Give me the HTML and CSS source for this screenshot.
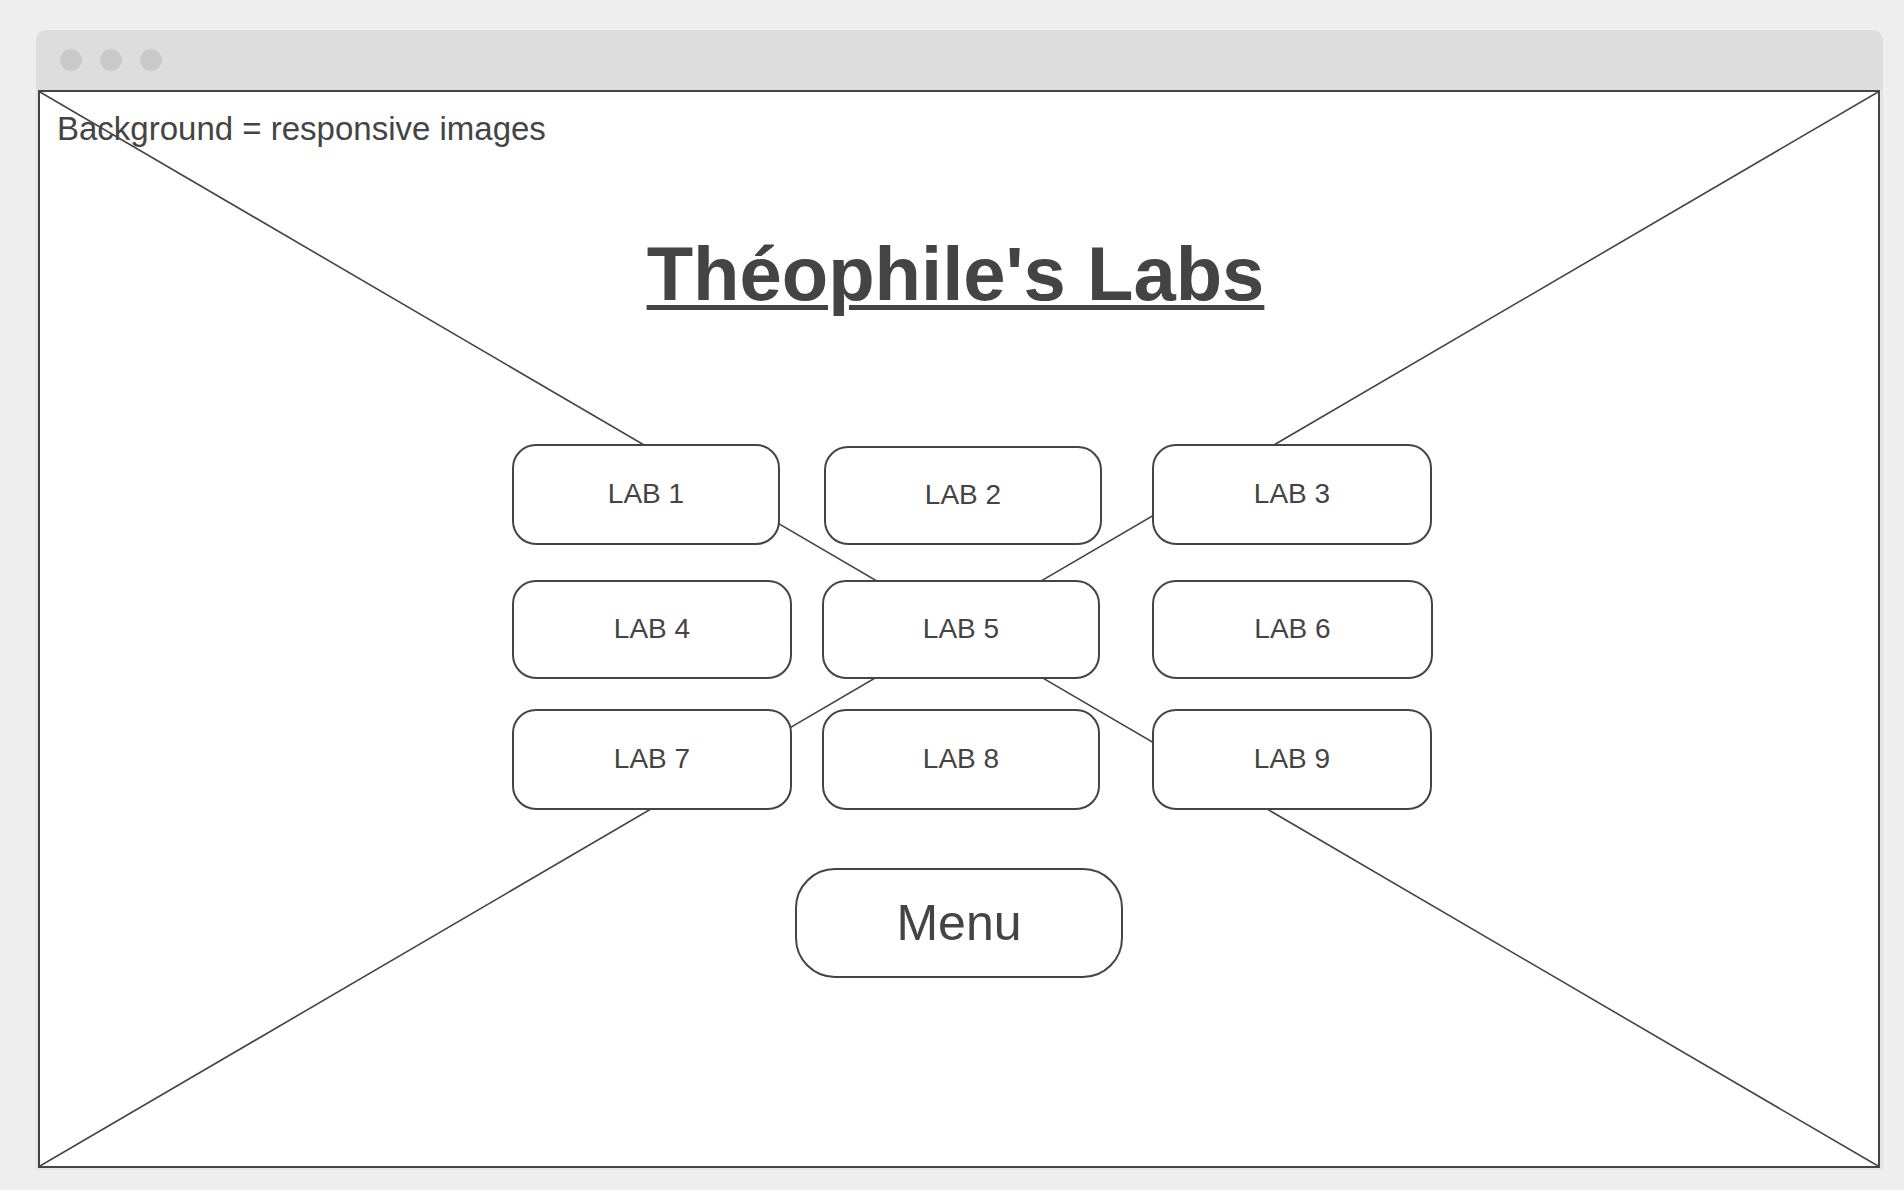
FILE: index.html
```html
<!DOCTYPE html>
<html lang="fr">
<head>
<meta charset="utf-8">
<title>Théophile's Labs</title>
<link rel="stylesheet" href="styles.css">
</head>
<body>
<div class="window">
  <div class="titlebar">
    <span class="dot"></span><span class="dot"></span><span class="dot"></span>
  </div>
  <div class="content">
    <svg class="cross" viewBox="0 0 100 100" preserveAspectRatio="none" aria-hidden="true">
      <line x1="0" y1="0" x2="100" y2="100" vector-effect="non-scaling-stroke"/>
      <line x1="100" y1="0" x2="0" y2="100" vector-effect="non-scaling-stroke"/>
    </svg>
    <p class="caption">Background = responsive images</p>
    <h1 class="title">Théophile's Labs</h1>
    <div class="labs">
      <a class="lab lab-1 r1">LAB 1</a>
      <a class="lab lab-2 r1">LAB 2</a>
      <a class="lab lab-3 r1 c3">LAB 3</a>
      <a class="lab lab-4 r2">LAB 4</a>
      <a class="lab lab-5 r2">LAB 5</a>
      <a class="lab lab-6 r2 c3">LAB 6</a>
      <a class="lab lab-7 r3">LAB 7</a>
      <a class="lab lab-8 r3">LAB 8</a>
      <a class="lab lab-9 r3 c3">LAB 9</a>
    </div>
    <a class="menu">Menu</a>
  </div>
</div>
</body>
</html>
```
FILE: styles.css
```css
* { box-sizing: border-box; }

html, body {
  margin: 0;
  background: #eeeeee;
  font-family: "Liberation Sans", Arial, sans-serif;
  color: #444444;
}

.window {
  margin: 30px 0 0 36px;
  width: 1847px;
  padding: 0 3px 2px 2px;
  background: #e4e4e4;
  border-radius: 10px 10px 0 0;
}

.titlebar {
  height: 60px;
  margin: 0 -3px 0 -2px;
  background: #dddddd;
  border-radius: 10px 10px 0 0;
  display: flex;
  align-items: center;
  gap: 18px;
  padding-left: 24px;
}

.dot {
  width: 22px;
  height: 22px;
  border-radius: 50%;
  background: #c9c9c9;
}

.content {
  position: relative;
  width: 1842px;
  height: 1078px;
  border: 2px solid #444444;
  background: #ffffff;
  overflow: hidden;
}

.cross {
  position: absolute;
  left: 0;
  top: 0;
  width: 100%;
  height: 100%;
}

.cross line {
  stroke: #444444;
  stroke-width: 1.6;
}

.caption,
.title,
.labs,
.menu {
  position: relative;
}

.caption {
  margin: 0;
  padding: 18px 0 0 17px;
  font-size: 33px;
  line-height: 38px;
}

.title {
  margin: 82px 0 0;
  padding-right: 7px;
  text-align: center;
  font-size: 76px;
  line-height: 88px;
  font-weight: 700;
  text-decoration: underline;
  text-decoration-thickness: 5px;
  text-underline-offset: 5px;
}

.labs {
  margin: 126px 0 0 472px;
  display: grid;
  grid-template-columns: 280px 278px 281px;
  column-gap: 30px;
  row-gap: 30px;
  align-items: start;
}

.lab {
  display: flex;
  align-items: center;
  justify-content: center;
  height: 101px;
  padding-bottom: 1px;
  border: 2px solid #444444;
  border-radius: 24px;
  background: #ffffff;
  font-size: 28px;
  color: #444444;
}

.r1 { margin-bottom: 5px; }
.r2 { height: 99px; }
.c3 { margin-left: 22px; }

.lab-1 { width: 268px; }
.lab-2 { margin: 2px 0 5px 2px; height: 99px; width: 278px; }
.lab-3 { width: 280px; }
.lab-6 { width: 281px; }
.lab-9 { width: 280px; }

.menu {
  display: flex;
  align-items: center;
  justify-content: center;
  width: 328px;
  height: 110px;
  margin: 58px auto 0;
  border: 2px solid #444444;
  border-radius: 40px;
  background: #ffffff;
  font-size: 50px;
  color: #444444;
}
```
